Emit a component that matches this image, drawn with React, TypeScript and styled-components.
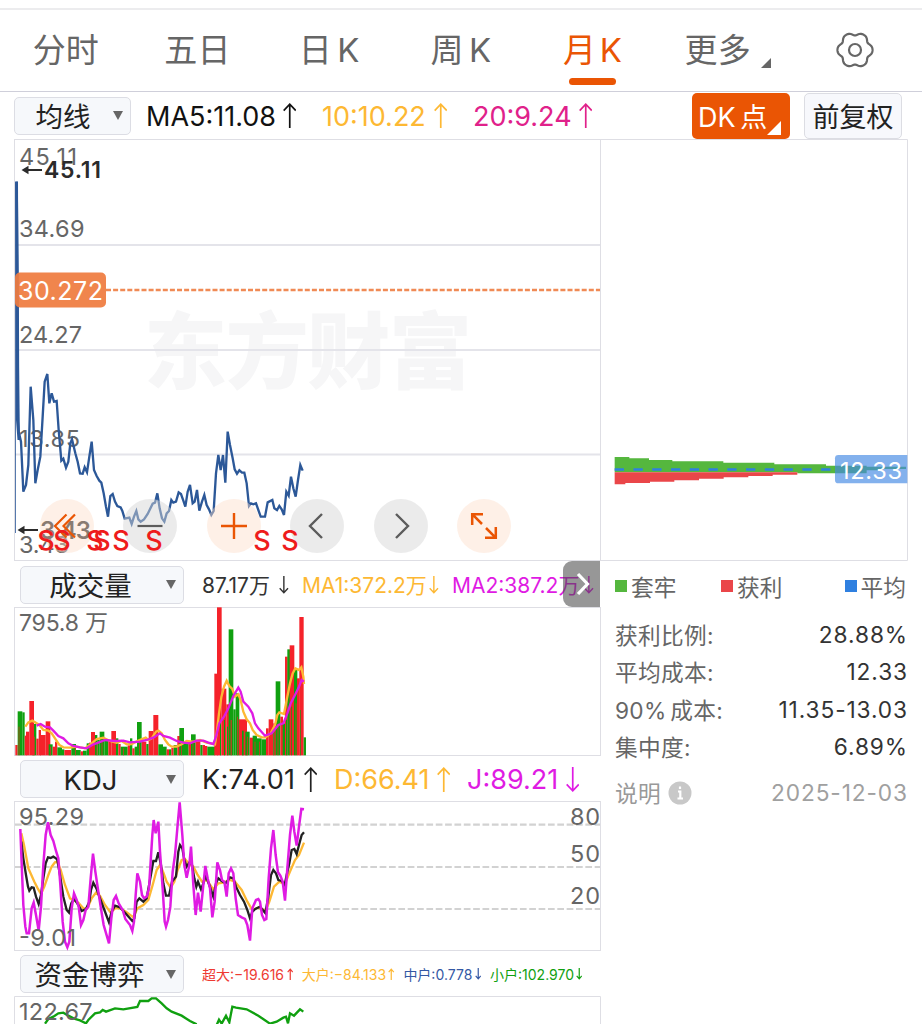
import React from 'react';
import styled, { createGlobalStyle, css } from 'styled-components';

const C = {
  orange: '#ea5504',
  amber: '#fdb833',
  pink: '#e0218a',
  magenta: '#df1be3',
  blue: '#2c5898',
  red: '#f5222a',
  green: '#10a010',
  text: '#222',
  grey: '#666',
  line: '#dedee4',
};

const GlobalStyle = createGlobalStyle`
  html, body { margin: 0; background: #fff; }
  body {
    height: 1024px;
    overflow: hidden;
    font-family: Inter, 'Noto Sans CJK SC', sans-serif;
    color: ${C.text};
  }
  * { box-sizing: border-box; }
  svg { display: block; }
`;

const Page = styled.div`
  width: 922px;
  height: 1024px;
  overflow: hidden;
  display: flex;
  flex-direction: column;
`;

const TabBar = styled.nav`
  flex: none;
  margin-top: 8px;
  height: 84px;
  border-top: 2px solid #ececee;
  border-bottom: 1px solid #cfcfda;
  display: grid;
  grid-template-columns: repeat(5, 131.7px) 130px 1fr;
`;

const Tab = styled.div<{ $active?: boolean }>`
  display: flex;
  flex-direction: column;
  align-items: center;
  padding-top: 20px;
  font-size: 33px;
  line-height: 40px;
  letter-spacing: 0.2px;
  word-spacing: ${(p) => (p.$active ? -6 : -4)}px;
  white-space: nowrap;
  color: ${(p) => (p.$active ? C.orange : C.grey)};
`;

const TabMark = styled.span`
  width: 47px;
  height: 7px;
  margin-top: 8px;
  border-radius: 4px;
  background: ${C.orange};
`;

const MoreTab = styled(Tab)`
  flex-direction: row;
  align-items: flex-start;
  padding-left: 26px;
  gap: 10px;
`;

const Corner = styled.span<{ $size: number; $color: string; $top?: number }>`
  width: 0;
  height: 0;
  margin-top: ${(p) => p.$top ?? 0}px;
  border-left: ${(p) => p.$size}px solid transparent;
  border-bottom: ${(p) => p.$size}px solid ${(p) => p.$color};
`;

const GearSlot = styled.div`
  display: flex;
  align-items: flex-start;
  padding: 20px 0 0 47px;
`;

const MaRow = styled.div`
  flex: none;
  height: 47px;
  padding: 0 20px 0 14px;
  display: flex;
  align-items: center;
`;

const Chip = styled.div<{ $solid?: boolean }>`
  width: 98px;
  height: 46px;
  border-radius: 5px;
  display: flex;
  align-items: center;
  justify-content: center;
  font-size: 27px;
  white-space: nowrap;
  ${(p) =>
    p.$solid
      ? css`
          background: ${C.orange};
          color: #fff;
          justify-content: flex-start;
          padding-left: 6px;
          word-spacing: -3px;
          margin-left: auto;
          margin-right: 14px;
        `
      : css`
          background: #f7f8fc;
          border: 1px solid #dcdde3;
        `}
`;

const Select = styled.div<{ $width: number }>`
  flex: none;
  width: ${(p) => p.$width}px;
  height: 38px;
  border: 1.5px solid #dcdde4;
  border-radius: 5px;
  background: #f6f8fb;
  display: flex;
  align-items: center;
  padding-right: 7px;
  font-size: 27.5px;
  line-height: 34px;
`;

const SelectLabel = styled.span<{ $pull?: number }>`
  flex: 1;
  padding-top: 2px;
  padding-right: ${(p) => p.$pull ?? 0}px;
  text-align: center;
  white-space: nowrap;
`;

const Caret = styled.span`
  width: 0;
  height: 0;
  margin-left: 2px;
  border-left: 5.5px solid transparent;
  border-right: 5.5px solid transparent;
  border-top: 9px solid ${C.grey};
`;

const Readings = styled.div<{ $gap: number; $left: number }>`
  display: flex;
  align-items: center;
  gap: ${(p) => p.$gap}px;
  padding-left: ${(p) => p.$left}px;
`;

const ReadingBox = styled.span<{ $w: number; $size: number; $color: string; $track: number }>`
  flex: none;
  width: ${(p) => p.$w}px;
  display: flex;
  justify-content: space-between;
  align-items: center;
  font-size: ${(p) => p.$size}px;
  line-height: 34px;
  letter-spacing: ${(p) => p.$track}px;
  white-space: nowrap;
  color: ${(p) => p.$color};
`;

const ReadingText = styled.span`
  padding-top: 2px;
`;

const Body = styled.div`
  flex: 1;
  margin-left: 14px;
  display: grid;
  grid-template-columns: 587px 307px;
`;

const Column = styled.div`
  display: flex;
  flex-direction: column;
`;

const Panel = styled.div<{ $h: number }>`
  position: relative;
  flex: none;
  height: ${(p) => p.$h}px;
  svg { overflow: visible; }
`;

const IndicatorHead = styled.div<{ $h: number }>`
  position: relative;
  flex: none;
  height: ${(p) => p.$h}px;
  padding: 1px 0 0 6px;
  display: flex;
  align-items: center;
`;

const Expander = styled.div`
  position: absolute;
  right: 1px;
  top: 0;
  width: 37px;
  height: 46px;
  border-radius: 9px 0 0 9px;
  background: rgba(70, 70, 70, 0.56);
  display: flex;
  align-items: center;
  justify-content: center;
`;

const Tools = styled.div`
  position: absolute;
  left: 26px;
  top: 360px;
  display: flex;
  gap: 29.4px;
`;

const Tool = styled.div<{ $warm?: boolean }>`
  width: 54px;
  height: 54px;
  border-radius: 50%;
  display: flex;
  align-items: center;
  justify-content: center;
  background: ${(p) => (p.$warm ? 'rgba(253, 222, 202, 0.45)' : 'rgba(214, 214, 214, 0.48)')};
  color: ${(p) => (p.$warm ? C.orange : '#5c5c5c')};
`;

const Signals = styled.div`
  position: absolute;
  inset: 0;
`;

const Side = styled.div`
  flex: 1;
  padding-left: 14px;
  padding-right: 1px;
  display: flex;
  flex-direction: column;
  color: #666;
  font-size: 22.7px;
`;

const Legend = styled.div`
  height: 50px;
  margin-bottom: 5px;
  display: grid;
  grid-template-columns: 106px 123.5px auto;
  align-items: center;
`;

const LegendItem = styled.span<{ $color: string }>`
  display: flex;
  align-items: center;
  gap: 4px;
  white-space: nowrap;
  &::before {
    content: '';
    width: 12px;
    height: 12px;
    background: ${(p) => p.$color};
  }
`;

const InfoRow = styled.div<{ $muted?: boolean }>`
  display: flex;
  align-items: center;
  justify-content: space-between;
  height: 37.3px;
  word-spacing: -3px;
  letter-spacing: 0.3px;
  margin-top: ${(p) => (p.$muted ? 9 : 0)}px;
  color: ${(p) => (p.$muted ? '#999' : '#666')};
`;

const InfoValue = styled.span<{ $muted?: boolean }>`
  letter-spacing: 0.9px;
  margin-right: -1px;
  color: ${(p) => (p.$muted ? '#a0a0a0' : '#333')};
`;

const Note = styled.span`
  display: flex;
  align-items: center;
  gap: 7px;
`;

function Arrow({ down, size, weight = 1.7 }: { down?: boolean; size: number; weight?: number }) {
  const w = size * 0.54;
  const a = w / 2;
  return (
    <svg width={w} height={size} fill="none" stroke="currentColor" strokeWidth={weight}>
      <g transform={down ? `rotate(180 ${a} ${size / 2})` : undefined}>
        <path d={`M${a} ${size}V1.2M0.7 ${a + 0.8}L${a} 1.2L${w - 0.7} ${a + 0.8}`} />
      </g>
    </svg>
  );
}

type ReadingProps = {
  text: string;
  w: number;
  size: number;
  color: string;
  arrow: number;
  down?: boolean;
  track?: number;
  weight?: number;
};

function Reading({ text, w, size, color, arrow, down, track = 0, weight }: ReadingProps) {
  return (
    <ReadingBox $w={w} $size={size} $color={color} $track={track}>
      <ReadingText>{text}</ReadingText>
      <Arrow size={arrow} down={down} weight={weight} />
    </ReadingBox>
  );
}

function Gear() {
  const pts = Array.from({ length: 120 }, (_, i) => {
    const t = (i / 120) * Math.PI * 2;
    const r = 16.3 + 1.5 * Math.cos(6 * t) - 0.25 * Math.cos(12 * t);
    return `${(20 + r * Math.cos(t)).toFixed(2)},${(20 + r * Math.sin(t)).toFixed(2)}`;
  }).join(' ');
  return (
    <svg width="40" height="40" fill="none" stroke="#666" strokeWidth="2.200">
      <polygon points={pts} strokeLinejoin="round" />
      <circle cx="20" cy="20" r="6" />
    </svg>
  );
}

// Series are recorded at three units per pixel, in each panel's own page offset.
const PRICE =
  '50,-505 53,-200 54,50 56,245 63,275 70,425 78,405 85,345 92,110 100,210 106,400 113,360 121,320 128,200 134,95 142,72 148,160 155,130 162,155 170,153 176,240 184,332 190,326 198,353 205,335 211,280 216,268 226,310 233,335 240,370 248,371 254,352 261,367 268,320 275,275 282,360 290,378 298,392 304,398 311,430 318,470 324,500 331,438 338,432 345,455 352,468 362,472 367,483 374,506 388,503 395,522 402,500 409,483 415,508 422,515 432,508 443,492 458,461 465,458 472,430 479,475 486,505 493,515 500,490 507,483 514,450 520,458 528,455 536,427 543,432 550,452 556,470 563,425 570,405 578,460 584,455 591,420 598,482 606,455 613,435 620,465 627,478 634,495 641,483 648,370 655,315 662,360 669,315 676,398 683,245 690,285 698,325 704,358 711,371 718,361 726,368 733,368 740,400 747,468 753,460 760,463 768,460 775,480 782,500 795,500 803,457 817,450 823,475 831,480 838,468 845,478 852,495 859,425 866,437 873,380 880,415 887,440 894,390 901,345 908,362';

const VOL_MA1 =
  '76,500 85,487 97,482 110,490 118,495 130,510 145,512 155,520 165,535 178,555 190,562 210,563 230,560 255,565 275,550 290,537 310,533 330,543 350,548 365,543 380,553 395,552 415,542 437,533 445,540 455,535 468,515 475,512 485,520 495,540 505,553 515,560 530,560 545,553 560,543 580,545 600,540 620,548 645,553 650,520 657,460 664,412 672,380 680,362 688,378 697,387 705,410 715,403 722,420 730,455 740,478 750,490 758,510 770,525 785,532 797,532 812,520 825,495 832,465 838,457 852,462 860,420 870,370 878,340 886,325 897,330 904,322 910,350 912,372';
const VOL_MA2 =
  '110,497 122,492 135,500 150,502 160,512 175,528 190,535 205,550 220,558 240,562 260,565 280,553 295,548 315,540 345,543 370,542 390,547 420,545 440,540 460,533 480,520 490,528 510,533 530,543 550,548 570,550 590,542 610,542 625,548 640,552 648,530 658,490 672,470 685,445 700,408 715,383 722,395 730,425 745,440 757,460 765,490 775,505 795,527 815,520 835,495 850,490 862,460 872,430 885,405 897,380 905,360 912,365';

type Bar = [number, number, number, 'r' | 'g'];
const BARS: Bar[] = [
  [46, 53, 555, 'r'], [53, 67, 454, 'g'], [67, 74, 457, 'g'], [74, 80, 527, 'r'], [78, 88, 515, 'r'],
  [97, 109, 492, 'g'], [88, 102, 423, 'r'], [109, 116, 536, 'r'], [116, 123, 510, 'r'], [120, 137, 525, 'r'],
  [137, 151, 484, 'r'], [146, 158, 553, 'g'], [158, 165, 560, 'r'], [165, 172, 545, 'r'], [172, 186, 562, 'g'],
  [186, 193, 568, 'g'], [193, 214, 570, 'r'], [214, 228, 552, 'g'], [228, 242, 570, 'g'], [242, 249, 574, 'r'],
  [249, 260, 572, 'g'], [260, 267, 550, 'g'], [267, 273, 548, 'r'], [273, 285, 516, 'r'], [285, 292, 525, 'g'],
  [292, 299, 540, 'g'], [299, 313, 515, 'g'], [313, 325, 538, 'g'], [325, 334, 540, 'r'], [334, 348, 513, 'r'],
  [348, 355, 535, 'g'], [355, 362, 552, 'r'], [362, 383, 560, 'g'], [383, 390, 556, 'r'], [390, 397, 535, 'g'],
  [397, 404, 565, 'r'], [404, 411, 560, 'g'], [411, 425, 486, 'g'], [425, 439, 545, 'r'], [439, 446, 552, 'g'],
  [446, 460, 513, 'r'], [460, 475, 465, 'r'], [475, 489, 553, 'g'], [489, 500, 560, 'g'], [500, 507, 568, 'r'],
  [507, 514, 568, 'g'], [514, 521, 564, 'r'], [521, 532, 555, 'g'], [532, 540, 528, 'r'], [538, 552, 504, 'g'],
  [552, 566, 545, 'g'], [566, 573, 545, 'r'], [573, 587, 523, 'g'], [587, 601, 540, 'r'], [601, 608, 555, 'g'],
  [608, 615, 555, 'r'], [615, 622, 558, 'r'], [622, 645, 560, 'g'], [665, 679, 386, 'r'], [643, 654, 341, 'r'],
  [651, 665, 142, 'r'], [679, 687, 433, 'r'], [686, 700, 208, 'g'], [700, 707, 448, 'g'], [707, 718, 400, 'g'],
  [716, 741, 478, 'r'], [736, 749, 515, 'g'], [749, 760, 533, 'r'], [758, 771, 527, 'g'], [771, 785, 535, 'g'],
  [785, 798, 538, 'g'], [798, 806, 505, 'r'], [806, 820, 478, 'r'], [820, 828, 490, 'r'], [827, 841, 364, 'g'],
  [841, 849, 470, 'r'], [848, 856, 490, 'g'], [855, 863, 290, 'r'], [862, 870, 268, 'g'], [869, 883, 256, 'r'],
  [882, 892, 325, 'g'], [891, 899, 355, 'r'], [898, 911, 171, 'r'], [911, 918, 532, 'g'],
];
// Slim bars of the other colour that show between the main ones.
const SLIM: Bar[] = [
  [56, 58, 500, 'r'], [102, 104, 530, 'r'], [150, 152, 560, 'r'], [226, 228, 562, 'r'], [290, 292, 545, 'r'],
  [305, 307, 545, 'r'], [369, 371, 565, 'r'], [417, 419, 545, 'r'], [543, 545, 545, 'r'], [578, 580, 550, 'r'],
  [660, 663, 480, 'g'], [672, 675, 480, 'g'], [681, 684, 500, 'g'], [692, 695, 480, 'r'], [712, 714, 470, 'r'],
  [726, 731, 512, 'g'], [742, 744, 530, 'r'], [764, 766, 545, 'r'], [778, 780, 545, 'r'], [820, 823, 515, 'g'],
  [833, 835, 500, 'r'], [858, 861, 480, 'g'], [873, 875, 440, 'g'], [887, 889, 430, 'r'], [901, 903, 450, 'g'],
];

const K_LINE =
  '64,260 70,310 78,360 84,395 88,407 95,397 101,398 108,425 116,447 123,420 130,370 137,325 144,307 152,309 160,305 168,310 172,315 180,360 190,425 200,465 207,473 214,445 222,432 232,445 245,468 258,462 268,440 273,405 280,383 290,402 300,430 312,462 327,502 335,470 345,452 360,457 375,473 397,498 403,490 410,440 418,430 430,440 440,430 450,375 460,318 468,318 475,292 483,330 490,385 498,422 507,422 516,380 528,365 535,290 540,270 547,280 553,315 560,335 570,320 576,330 583,370 589,395 594,380 603,403 610,385 617,362 628,390 640,425 648,385 655,370 665,378 677,385 690,367 700,370 708,395 720,420 732,440 742,465 750,490 757,470 766,462 780,455 796,474 805,425 813,360 820,345 828,355 835,375 845,378 854,390 860,360 868,325 875,285 883,282 890,297 897,270 905,240 912,232';
const D_LINE =
  '64,235 72,270 85,340 95,362 103,380 113,400 123,417 133,395 145,360 155,335 165,322 172,320 182,345 195,390 210,430 220,435 235,443 250,460 262,460 275,430 288,413 300,422 315,450 332,473 345,460 360,460 378,470 400,487 412,460 430,450 445,435 458,390 470,345 480,330 490,352 500,380 512,398 523,380 533,345 545,315 555,312 568,328 580,335 592,358 606,380 620,375 640,403 655,385 670,383 690,375 705,380 725,405 742,440 757,465 775,458 797,467 808,440 822,395 838,380 854,388 870,350 885,315 897,300 905,280 912,263';
const J_LINE =
  '61,222 64,300 70,450 76,515 80,535 87,535 95,460 101,443 108,480 116,527 123,455 130,330 137,240 144,202 152,240 160,258 168,288 175,310 181,390 188,500 195,560 202,577 208,560 215,460 222,415 230,435 236,455 243,510 250,495 257,465 265,455 272,370 279,296 286,350 295,410 302,455 311,510 327,565 334,490 341,435 348,423 356,445 368,465 376,492 390,510 397,528 402,500 407,420 412,355 420,380 426,420 432,430 440,425 447,400 452,320 457,240 461,195 467,235 475,200 480,290 488,400 494,500 498,515 504,495 511,455 518,350 525,300 532,220 539,142 547,240 553,330 560,368 568,330 573,275 580,390 587,480 594,413 602,470 609,400 616,333 623,370 630,400 637,487 644,440 652,322 660,345 666,375 673,380 680,425 686,355 693,340 700,355 707,430 714,480 725,487 735,492 742,510 750,557 757,460 768,435 775,432 780,440 786,480 793,495 799,492 806,370 813,280 820,225 827,300 834,352 841,362 848,380 855,437 862,340 870,240 877,182 883,230 890,272 897,215 904,162 912,163';

const FUND_A =
  '135,236 145,222 160,215 175,205 190,203 205,212 225,222 240,226 258,235 265,225 285,205 300,202 308,195 318,200 345,190 370,193 412,186 420,168 445,168 455,160 468,160 485,175 500,190 515,200 545,212 570,228 590,238';
const FUND_B =
  '650,240 657,224 665,236 678,212 688,232 697,185 708,188 740,193 775,212 810,236 830,230 850,218 858,215 864,235 870,205 882,212 900,193 910,200';

function Series({ points, color, width = 7 }: { points: string; color: string; width?: number }) {
  return <polyline points={points} fill="none" stroke={color} strokeWidth={width} strokeLinejoin="miter" />;
}

type LabelProps = {
  x: number;
  y: number;
  len: number;
  children: string;
  size?: number;
  color?: string;
  weight?: number;
};

function Label({ x, y, len, children, size = 23.5, color = '#666', weight = 400 }: LabelProps) {
  return (
    <text x={x} y={y} textLength={len} fontSize={size} fill={color} fontWeight={weight}>
      {children}
    </text>
  );
}

function PriceChart() {
  return (
    <Panel $h={422}>
      <svg width="587" height="422" viewBox="14 139 587 422">
        <rect x="14.5" y="139.5" width="586" height="421" fill="none" stroke={C.line} />
        <text x="144" y="382" textLength="328" fontSize="83" fontWeight="900" fill="#f6f6f7">
          东方财富
        </text>
        <g stroke="#e4e4ea" strokeWidth="2">
          <path d="M15 245H600M15 350H600M15 454.5H600" />
        </g>
        <path d="M106 290H600" stroke="#f08a55" strokeWidth="2.400" strokeDasharray="5 2.1" />
        <Label x={19} y={164.5} len={58}>45.11</Label>
        <Label x={19} y={237} len={65.5}>34.69</Label>
        <Label x={19} y={342.5} len={63}>24.27</Label>
        <Label x={19} y={447} len={61}>13.85</Label>
        <Label x={19} y={552.5} len={50}>3.43</Label>
        <path d="M15.5 182V533" stroke={C.blue} strokeWidth="1" opacity="0.8" />
        <path d="M15.2 181.500H18L18.900 420L20.500 440H17.500L16 420Z" fill={C.blue} />
        <g transform="translate(0 350) scale(0.33333)">
          <Series points={PRICE} color={C.blue} />
        </g>
        <rect x="15" y="272.5" width="91" height="35" rx="5" fill="#ef7c40" opacity="0.93" />
        <Label x={18} y={299.5} len={85} size={25} color="#fff">30.272</Label>
        <g fill="#2b2b2b" stroke="#2b2b2b">
          <path d="M28 170H42M24 530H38" strokeWidth="2.200" />
          <path d="M21.5 170l7-4.200v8.400zM17.500 530l7-4.200v8.400z" stroke="none" />
        </g>
        <Label x={44} y={178} len={57} size={23} weight={600} color="#2b2b2b">45.11</Label>
        <Label x={40} y={538.5} len={51} size={24} weight={600} color="#2b2b2b">3.43</Label>
      </svg>
      <Tools>
        <Tool $warm>
          <svg width="24" height="28" fill="none" stroke="currentColor" strokeWidth="2.200">
            <path d="M11.500 2.500L0 14L11.500 25.500M20 2.500L8.500 14L20 25.500" />
          </svg>
        </Tool>
        <Tool>
          <svg width="26" height="26" stroke="currentColor" strokeWidth="2.200">
            <path d="M0.500 13H25.500" />
          </svg>
        </Tool>
        <Tool $warm>
          <svg width="26" height="26" stroke="currentColor" strokeWidth="2.400">
            <path d="M0 13H26M13 0V26" />
          </svg>
        </Tool>
        <Tool>
          <svg width="18" height="26" fill="none" stroke="currentColor" strokeWidth="2.400">
            <path d="M14 1L2 13L14 25" />
          </svg>
        </Tool>
        <Tool>
          <svg width="18" height="26" fill="none" stroke="currentColor" strokeWidth="2.400">
            <path d="M4 1L16 13L4 25" />
          </svg>
        </Tool>
        <Tool $warm>
          <svg width="28" height="28" fill="none" stroke="currentColor" strokeWidth="2.500">
            <path d="M2.200 13V2.200H13M2.200 2.200L12 12M25.800 15V25.800H15M25.800 25.800L16 16" />
          </svg>
        </Tool>
      </Tools>
      <Signals>
        <svg width="587" height="422" viewBox="14 139 587 422">
          <g fontSize="27" fontWeight="500" fill="#ee1c1c" textAnchor="middle">
            {[46, 62, 95, 102, 121, 154, 262, 290].map((x) => (
              <text key={x} x={x} y="550">
                S
              </text>
            ))}
          </g>
        </svg>
      </Signals>
    </Panel>
  );
}

function VolumeChart() {
  return (
    <Panel $h={149}>
      <svg width="587" height="149" viewBox="14 607 587 149">
        <rect x="14.5" y="607.5" width="586" height="148" fill="none" stroke={C.line} />
        <Label x={19} y={630.5} len={89} size={23}>795.8 万</Label>
        <g transform="translate(0 560) scale(0.33333)">
          {[...BARS, ...SLIM].map(([a, b, top, k]) => (
            <rect key={`${a}-${b}`} x={a} y={top} width={b - a} height={586 - top} fill={k === 'r' ? C.red : C.green} />
          ))}
          <Series points={VOL_MA1} color={C.amber} />
          <Series points={VOL_MA2} color={C.magenta} />
        </g>
      </svg>
    </Panel>
  );
}

function KdjChart() {
  return (
    <Panel $h={150}>
      <svg width="587" height="150" viewBox="14 801 587 150">
        <rect x="14.5" y="801.5" width="586" height="149" fill="none" stroke={C.line} />
        <path
          d="M15 824.700H600M15 867H600M15 909H600"
          stroke="#d2d2d2"
          strokeWidth="2.200"
          strokeDasharray="6.700 2.650"
        />
        <g transform="translate(0 755) scale(0.33333)">
          <Series points={D_LINE} color={C.amber} />
          <Series points={K_LINE} color="#222" />
          <Series points={J_LINE} color={C.magenta} width={7.5} />
        </g>
        <Label x={19} y={825} len={65}>95.29</Label>
        <Label x={19} y={945.5} len={57}>-9.01</Label>
        <Label x={570} y={825} len={30}>80</Label>
        <Label x={570} y={862} len={30}>50</Label>
        <Label x={570} y={904} len={30}>20</Label>
      </svg>
    </Panel>
  );
}

function FundChart() {
  return (
    <Panel $h={28}>
      <svg width="587" height="28" viewBox="14 996 587 28">
        <path d="M14.500 1026V996.500H600.500V1026" fill="none" stroke={C.line} />
        <g transform="translate(0 945) scale(0.33333)">
          <Series points={FUND_A} color={C.green} />
          <Series points={FUND_B} color={C.green} />
        </g>
        <Label x={19} y={1020} len={73.5}>122.67</Label>
      </svg>
    </Panel>
  );
}

function ChipChart() {
  return (
    <Panel $h={422}>
      <svg width="307" height="422" viewBox="601 139 307 422">
        <path d="M601 139.500H907.500V560.500H601" fill="none" stroke={C.line} />
        <g transform="translate(600 440) scale(0.33333)">
          <path
            d="M44 97V51H88V55H147V60H217V64H370V68H523V73H678V77H800V80H918V87H850V91H800V100H592V97Z"
            fill="#55b73e"
          />
          <path
            d="M44 97V133H76V129H150V125H223V121H297V116H371V112H445V108H518V104H592V97Z"
            fill="#ea4649"
          />
          <path d="M44 88.500H705" stroke="#2f80e0" strokeWidth="8" strokeDasharray="28 28.300" />
          <path d="M715 45H922V130H715Q705 130 705 120V55Q705 45 715 45Z" fill="#4389e4" opacity="0.66" />
        </g>
        <Label x={840} y={478.5} len={62} size={23.5} color="#fff">12.33</Label>
      </svg>
    </Panel>
  );
}

export default function App() {
  return (
    <Page>
      <GlobalStyle />
      <TabBar>
        <Tab>分时</Tab>
        <Tab>五日</Tab>
        <Tab>日 K</Tab>
        <Tab>周 K</Tab>
        <Tab $active>
          月 K
          <TabMark />
        </Tab>
        <MoreTab>
          更多
          <Corner $size={10} $color={C.grey} $top={28} />
        </MoreTab>
        <GearSlot>
          <Gear />
        </GearSlot>
      </TabBar>

      <MaRow>
        <Select $width={117}>
          <SelectLabel>均线</SelectLabel>
          <Caret />
        </Select>
        <Readings $left={15} $gap={26}>
          <Reading text="MA5:11.08" w={150} size={27} color="#111" arrow={25} />
          <Reading text="10:10.22" w={125} size={27} color={C.amber} arrow={25} />
          <Reading text="20:9.24" w={119} size={27} color={C.pink} arrow={25} />
        </Readings>
        <Chip $solid>
          DK 点
          <Corner $size={14} $color="#fff" $top={24} />
        </Chip>
        <Chip>前复权</Chip>
      </MaRow>

      <Body>
        <Column>
          <PriceChart />
          <IndicatorHead $h={46}>
            <Select $width={164}>
              <SelectLabel $pull={4}>成交量</SelectLabel>
              <Caret />
            </Select>
            <Readings $left={18} $gap={13}>
              <Reading text="87.17万" w={87} size={21} color="#333" arrow={18} down weight={1.4} />
              <Reading text="MA1:372.2万" w={137} size={21} color={C.amber} arrow={18} down weight={1.4} />
              <Reading text="MA2:387.2万" w={142} size={21} color={C.magenta} arrow={18} down weight={1.4} />
            </Readings>
            <Expander>
              <svg width="16" height="24" fill="none" stroke="#fff" strokeWidth="3.200">
                <path d="M4 2L13.500 12L4 22" />
              </svg>
            </Expander>
          </IndicatorHead>
          <VolumeChart />
          <IndicatorHead $h={45}>
            <Select $width={164}>
              <SelectLabel $pull={4}>KDJ</SelectLabel>
              <Caret />
            </Select>
            <Readings $left={18} $gap={17}>
              <Reading text="K:74.01" w={115} size={27} color="#222" arrow={25} track={0.3} />
              <Reading text="D:66.41" w={116} size={27} color={C.amber} arrow={25} />
              <Reading text="J:89.21" w={112} size={27} color={C.magenta} arrow={25} down />
            </Readings>
          </IndicatorHead>
          <KdjChart />
          <IndicatorHead $h={45}>
            <Select $width={164}>
              <SelectLabel $pull={6}>资金博弈</SelectLabel>
              <Caret />
            </Select>
            <Readings $left={18} $gap={8.7}>
              <Reading text="超大:−19.616" w={91} size={14} color="#ee3a32" arrow={12} weight={1.2} />
              <Reading text="大户:−84.133" w={93} size={14} color={C.amber} arrow={12} weight={1.2} />
              <Reading text="中户:0.778" w={78} size={14} color="#3458a4" arrow={12} down weight={1.2} />
              <Reading text="小户:102.970" w={92} size={14} color={C.green} arrow={12} down weight={1.2} />
            </Readings>
          </IndicatorHead>
          <FundChart />
        </Column>

        <Column>
          <ChipChart />
          <Side>
            <Legend>
              <LegendItem $color="#55b73e">套牢</LegendItem>
              <LegendItem $color="#ea4649">获利</LegendItem>
              <LegendItem $color="#2f80e0">平均</LegendItem>
            </Legend>
            <InfoRow>
              获利比例:<InfoValue>28.88%</InfoValue>
            </InfoRow>
            <InfoRow>
              平均成本:<InfoValue>12.33</InfoValue>
            </InfoRow>
            <InfoRow>
              90% 成本:<InfoValue>11.35-13.03</InfoValue>
            </InfoRow>
            <InfoRow>
              集中度:<InfoValue>6.89%</InfoValue>
            </InfoRow>
            <InfoRow $muted>
              <Note>
                说明
                <svg width="24" height="24">
                  <circle cx="12" cy="12" r="11.5" fill="#c8c8c8" />
                  <path d="M12 5.500V8M10 10.500H12.300V17.500M9.500 17.500H15" stroke="#fff" strokeWidth="2.200" fill="none" />
                </svg>
              </Note>
              <InfoValue $muted>2025-12-03</InfoValue>
            </InfoRow>
          </Side>
        </Column>
      </Body>
    </Page>
  );
}
